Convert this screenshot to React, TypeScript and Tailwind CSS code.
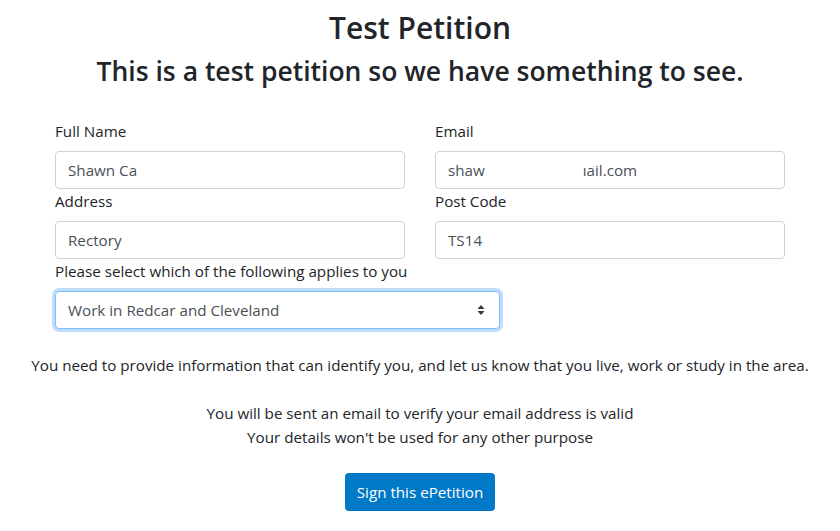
import { useState } from "react";

const font = { fontFamily: '"Open Sans", "Noto Sans", Arial, sans-serif' };

function Field({ label, value, children }: { label: string; value?: string; children?: React.ReactNode }) {
  return (
    <div className="flex flex-col">
      <label className="mb-2 text-[15.2px] leading-6 text-[#212529]">{label}</label>
      <div className="flex h-[38px] items-center rounded border border-[#ced4da] bg-white px-3 text-[15.2px] text-[#495057]">
        {children ?? value}
      </div>
    </div>
  );
}

export default function App() {
  const [choice] = useState("Work in Redcar and Cleveland");

  return (
    <div className="min-h-[531px] bg-white text-[#212529]" style={font}>
      <h1 className="pt-[8px] text-center text-[30px] font-semibold leading-[40px]">Test Petition</h1>
      <h2 className="mt-[5px] text-center text-[26.5px] font-semibold leading-[36px]">
        This is a test petition so we have something to see.
      </h2>

      <div className="mx-auto mt-[30px] w-[730px]">
        <div className="grid grid-cols-2 gap-x-[30px]">
          <Field label="Full Name" value="Shawn Ca" />
          <Field label="Email">
            <span>shaw</span>
            <span className="ml-[98px]">ıail.com</span>
          </Field>
          <Field label="Address" value="Rectory" />
          <Field label="Post Code" value="TS14" />
        </div>

        <label className="mb-2 block text-[15.2px] leading-6">Please select which of the following applies to you</label>
        <div className="flex h-[38px] w-[445px] items-center justify-between rounded border border-[#80bdff] bg-white pl-3 pr-[14px] text-[15.2px] text-[#495057] shadow-[0_0_0_3px_rgba(0,123,255,0.25)]">
          <span>{choice}</span>
          <svg width="8" height="12" viewBox="0 0 8 12" className="text-[#343a40]">
            <path d="M4 1 L7.5 5 H0.5 Z M4 11 L7.5 7 H0.5 Z" fill="currentColor" />
          </svg>
        </div>
      </div>

      <p className="mt-[24px] text-center text-[15.2px] leading-6">
        You need to provide information that can identify you, and let us know that you live, work or study in the area.
      </p>
      <p className="mt-[24px] text-center text-[15.2px] leading-6">
        You will be sent an email to verify your email address is valid
        <br />
        Your details won't be used for any other purpose
      </p>

      <div className="mt-[24px] flex justify-center">
        <button className="h-[38px] rounded bg-[#0079c6] px-3 text-[15.2px] text-white">Sign this ePetition</button>
      </div>
    </div>
  );
}
